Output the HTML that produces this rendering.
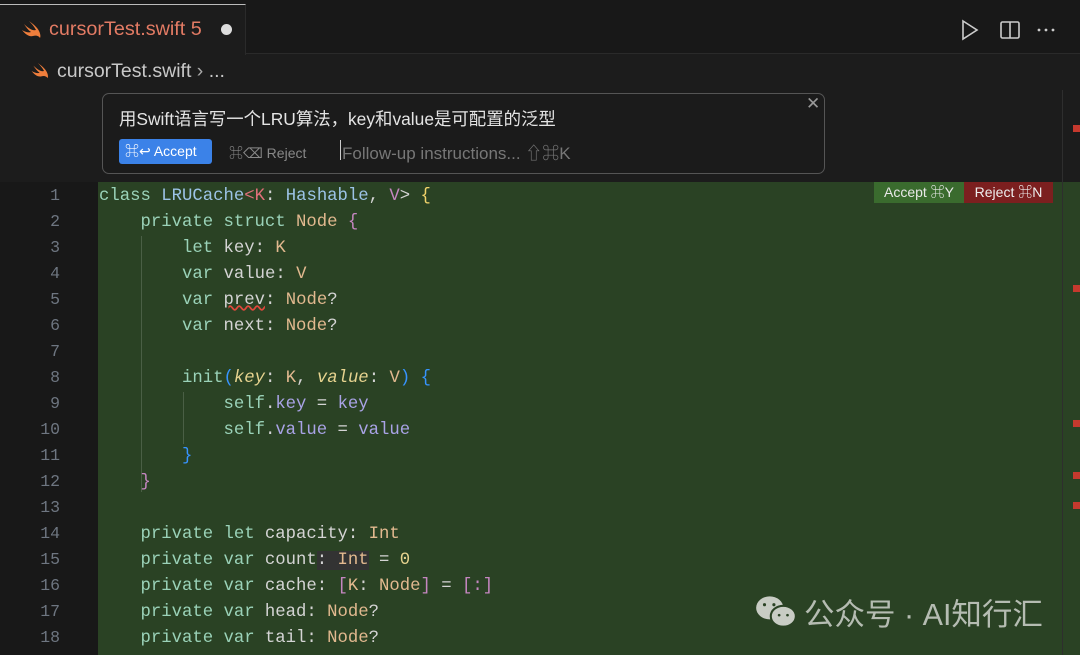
<!DOCTYPE html>
<html><head><meta charset="utf-8"><style>
*{margin:0;padding:0;box-sizing:border-box}
body{width:1080px;height:655px;overflow:hidden;background:#1c1c1c;font-family:"Liberation Sans","Noto Sans CJK SC",sans-serif;position:relative}
.abs{position:absolute}
.tabbar{left:0;top:0;width:1080px;height:54px;background:#181818;border-bottom:1px solid #2a2a2a}
.tab{left:0;top:4px;width:246px;height:51px;background:#1c1c1c;border-top:1px solid #bbb;border-right:1px solid #2a2a2a}
.code{font-family:"Liberation Mono",monospace;font-size:17.3px;line-height:26px;white-space:pre;color:#d4d4d4}
.ln{left:0;width:60px;text-align:right;color:#6e7681;font-family:"Liberation Mono",monospace;font-size:16.5px;line-height:26px}
.k{color:#9ad2b8}.t{color:#e2b98f}.b{color:#9cc3e6}.r{color:#e0707a}.p{color:#c586c0}.y{color:#f1d36b}.bl{color:#3794ff}.pu{color:#a9a3e6}.n{color:#e6d38f}
.mk{left:1073px;width:7px;height:7px;background:#c6392e}
</style></head><body>
<div class="abs tabbar"></div>
<div class="abs tab"></div>
<svg class="abs" style="left:22px;top:21px" width="20" height="18" viewBox="0 0 20 18"><path d="M2 3 C7 8 11 10 14 9 C12 5 9 2 7 0 C11 3 15 6 17 10 C18 12 19 15 18 17 C17 15 14 14 11 15 C7 16 3 13 0 9 C3 11 7 12 9 11 C6 9 4 6 2 3Z" fill="#ef7e3c"/></svg>
<div class="abs" style="left:49px;top:18px;font-size:19.8px;color:#e37b64">cursorTest.swift 5</div>
<div class="abs" style="left:221px;top:24px;width:11px;height:11px;border-radius:50%;background:#ddd"></div>
<svg class="abs" style="left:960px;top:19px" width="100" height="22" viewBox="0 0 100 22"><path d="M3 2 L17 11 L3 20Z" fill="none" stroke="#ccc" stroke-width="1.6"/><rect x="41" y="3" width="18" height="16" rx="1.5" fill="none" stroke="#ccc" stroke-width="1.6"/><line x1="50" y1="3" x2="50" y2="19" stroke="#ccc" stroke-width="1.6"/><circle cx="79" cy="11" r="1.4" fill="#ccc"/><circle cx="86" cy="11" r="1.4" fill="#ccc"/><circle cx="93" cy="11" r="1.4" fill="#ccc"/></svg>
<svg class="abs" style="left:31px;top:63px" width="19" height="16" viewBox="0 0 20 18"><path d="M2 3 C7 8 11 10 14 9 C12 5 9 2 7 0 C11 3 15 6 17 10 C18 12 19 15 18 17 C17 15 14 14 11 15 C7 16 3 13 0 9 C3 11 7 12 9 11 C6 9 4 6 2 3Z" fill="#ef7e3c"/></svg>
<div class="abs" style="left:57px;top:60px;font-size:19.5px;color:#c8c8c8">cursorTest.swift <span style="color:#aaa">›</span> ...</div>
<div class="abs" style="left:0;top:182px;width:98px;height:473px;background:#181818"></div>
<div class="abs" style="left:98px;top:182px;width:982px;height:473px;background:#2a4224"></div>
<div class="abs" style="left:1062px;top:90px;width:1px;height:565px;background:#2e2e2e"></div>
<div class="abs" style="left:102px;top:93px;width:723px;height:81px;background:#1b1b1b;border:1px solid #555;border-radius:7px"></div>
<div class="abs" style="left:119px;top:106px;font-size:17.4px;color:#e4e4e4">用Swift语言写一个LRU算法，key和value是可配置的泛型</div>
<div class="abs" style="left:806px;top:94px;font-size:17px;color:#999">✕</div>
<div class="abs" style="left:119px;top:139px;width:93px;height:25px;background:#3b82e8;border-radius:3px;color:#fff;font-size:14px;line-height:25px;padding-left:6px">⌘↩ Accept</div>
<div class="abs" style="left:229px;top:143px;font-size:14px;color:#888">⌘⌫ Reject</div>
<div class="abs" style="left:340px;top:140px;width:1px;height:20px;background:#ccc"></div>
<div class="abs" style="left:342px;top:139px;font-size:17px;color:#777">Follow-up instructions... ⇧⌘K</div>
<div class="abs" style="left:874px;top:182px;width:90px;height:21px;background:#3a6b2e;color:#e8e8e8;font-size:14px;line-height:21px;text-align:center">Accept ⌘Y</div>
<div class="abs" style="left:964px;top:182px;width:89px;height:21px;background:#7c1f1f;color:#eee;font-size:14px;line-height:21px;text-align:center">Reject ⌘N</div>
<div class="abs mk" style="top:125px"></div><div class="abs mk" style="top:285px"></div><div class="abs mk" style="top:420px"></div><div class="abs mk" style="top:472px"></div><div class="abs mk" style="top:502px"></div>
<div class="abs ln" style="top:183px">1<br>2<br>3<br>4<br>5<br>6<br>7<br>8<br>9<br>10<br>11<br>12<br>13<br>14<br>15<br>16<br>17<br>18</div>
<div class="abs" style="left:141px;top:236px;width:1px;height:256px;background:#4a5f45"></div>
<div class="abs" style="left:183px;top:392px;width:1px;height:52px;background:#4a5f45"></div>
<div class="abs code" style="left:99px;top:184px"><span class="k">class</span> <span class="b">LRUCache</span><span class="r">&lt;K</span>: <span class="b">Hashable</span>, <span class="p">V</span>&gt; <span class="y">{</span>
    <span class="k">private struct</span> <span class="t">Node</span> <span class="p">{</span>
        <span class="k">let</span> key: <span class="t">K</span>
        <span class="k">var</span> value: <span class="t">V</span>
        <span class="k">var</span> <span style="text-decoration:underline wavy #e0483c">prev</span>: <span class="t">Node</span>?
        <span class="k">var</span> next: <span class="t">Node</span>?

        <span class="k">init</span><span class="bl">(</span><i class="n">key</i>: <span class="t">K</span>, <i class="n">value</i>: <span class="t">V</span><span class="bl">)</span> <span class="bl">{</span>
            <span class="k">self</span>.<span class="pu">key</span> = <span class="pu">key</span>
            <span class="k">self</span>.<span class="pu">value</span> = <span class="pu">value</span>
        <span class="bl">}</span>
    <span class="p">}</span>

    <span class="k">private let</span> capacity: <span class="t">Int</span>
    <span class="k">private var</span> count<span style="background:#333">: <span class="t">Int</span></span> = <span class="n">0</span>
    <span class="k">private var</span> cache: <span class="p">[</span><span class="t">K</span>: <span class="t">Node</span><span class="p">]</span> = <span class="p">[:]</span>
    <span class="k">private var</span> head: <span class="t">Node</span>?
    <span class="k">private var</span> tail: <span class="t">Node</span>?</div>
<svg class="abs" style="left:753px;top:592px" width="46" height="38" viewBox="0 0 44 36"><ellipse cx="16" cy="15" rx="13" ry="11" fill="#c8ccc4"/><ellipse cx="29" cy="23" rx="12" ry="10" fill="#c8ccc4" stroke="#2a4224" stroke-width="2"/><circle cx="11" cy="12" r="1.5" fill="#2a4224"/><circle cx="20" cy="12" r="1.5" fill="#2a4224"/><circle cx="25" cy="22" r="1.3" fill="#2a4224"/><circle cx="33" cy="22" r="1.3" fill="#2a4224"/></svg>
<div class="abs" style="left:804px;top:590px;font-size:30.5px;color:#b5bcb2">公众号 · AI知行汇</div>
</body></html>
